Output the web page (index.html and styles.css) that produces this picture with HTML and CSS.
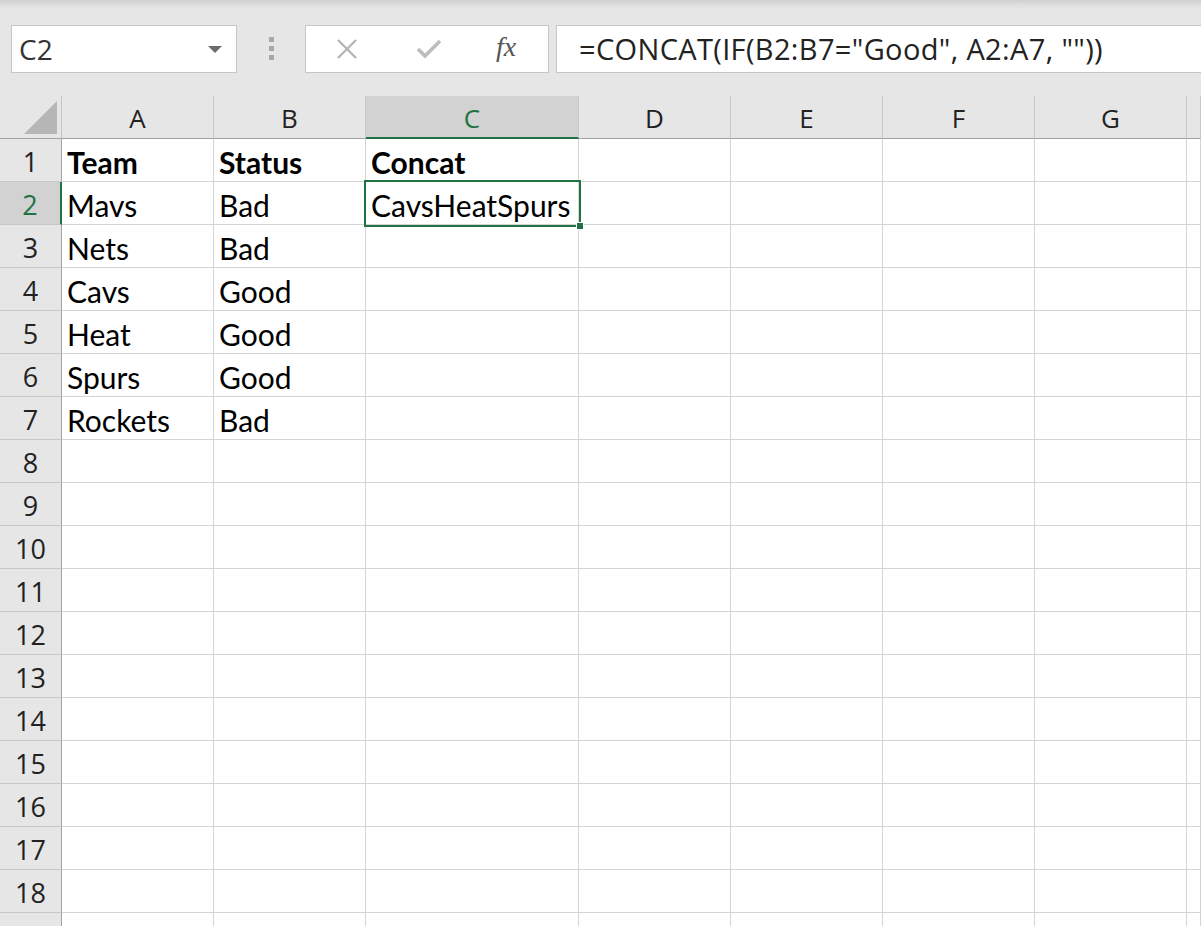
FILE: index.html
```html
<!DOCTYPE html>
<html lang="en">
<head>
    <meta charset="UTF-8">
    <title>Excel - CONCAT</title>
    <link rel="stylesheet" href="styles.css">
</head>
<body>
    <div class="toolbar">
        <div class="namebox">
            <span class="name">C2</span>
            <span class="caret"></span>
        </div>
        <div class="grip"><i></i><i></i><i></i></div>
        <div class="buttons">
            <svg class="ico" width="24" height="24" viewBox="0 0 24 24"><path d="M3 3 L21 21 M21 3 L3 21" stroke="#b3b3b3" stroke-width="2.2" fill="none"/></svg>
            <svg class="ico" width="28" height="24" viewBox="0 0 28 24"><path d="M3 12 L10 19 L25 4" stroke="#bdbdbd" stroke-width="3.6" fill="none"/></svg>
            <span class="fx">fx</span>
        </div>
        <div class="formula">=CONCAT(IF(B2:B7="Good", A2:A7, ""))</div>
    </div>

    <div class="sheet">
        <div class="corner"><span class="tri"></span></div>
        <div class="colhead">A</div>
        <div class="colhead">B</div>
        <div class="colhead active">C</div>
        <div class="colhead">D</div>
        <div class="colhead">E</div>
        <div class="colhead">F</div>
        <div class="colhead">G</div>
        <div class="colhead"></div>
    </div>

    <div class="sheet" id="rows"></div>

    <script>
        var data = [
            ["Team", "Status", "Concat"],
            ["Mavs", "Bad", "CavsHeatSpurs"],
            ["Nets", "Bad", ""],
            ["Cavs", "Good", ""],
            ["Heat", "Good", ""],
            ["Spurs", "Good", ""],
            ["Rockets", "Bad", ""]
        ];
        var html = "";
        for (var r = 1; r <= 19; r++) {
            html += '<div class="rowhead' + (r === 2 ? ' active' : '') + '">' + r + '</div>';
            for (var c = 0; c < 8; c++) {
                var val = (data[r - 1] && data[r - 1][c]) || "";
                var cls = "cell";
                if (r === 1) cls += " bold";
                if (r === 2 && c === 2) {
                    html += '<div class="' + cls + ' sel">' + val + '<span class="selbox"><span class="handle"></span></span></div>';
                } else {
                    html += '<div class="' + cls + '">' + val + '</div>';
                }
            }
        }
        document.getElementById("rows").innerHTML = html;
    </script>
</body>
</html>
```

FILE: styles.css
```css
body {
    margin: 0;
    background-color: #e6e6e6;
    overflow: hidden;
    height: 926px;
}
.toolbar {
    height: 96px;
    display: flex;
    align-items: flex-start;
    padding-top: 25px;
    box-sizing: border-box;
    background: linear-gradient(#cfcfcf 0px, #e2e2e2 6px, #e6e6e6 10px);
    font-family: "Open Sans", "Noto Sans", sans-serif;
    color: #333;
}
.namebox {
    margin-left: 11px;
    width: 226px;
    height: 48px;
    box-sizing: border-box;
    background: #fff;
    border: 1px solid #c6c6c6;
    display: flex;
    align-items: center;
    justify-content: space-between;
    padding: 0 14px 0 7px;
}
.name {
    font-size: 28px;
}
.caret {
    width: 0;
    height: 0;
    border-left: 7px solid transparent;
    border-right: 7px solid transparent;
    border-top: 7px solid #6b6b6b;
}
.grip {
    width: 68px;
    display: flex;
    flex-direction: column;
    align-items: center;
    gap: 4px;
    padding-top: 12px;
}
.grip i {
    display: block;
    width: 5px;
    height: 5px;
    background: #a8a8a8;
}
.buttons {
    width: 244px;
    height: 48px;
    box-sizing: border-box;
    background: #fff;
    border: 1px solid #c6c6c6;
    display: flex;
    align-items: center;
    padding-left: 29px;
}
.buttons .ico {
    margin-right: 56px;
}
.buttons .ico + .ico {
    margin-right: 53px;
}
.fx {
    font-family: "Liberation Serif", serif;
    font-style: italic;
    font-size: 28px;
    color: #555;
    margin-top: -4px;
}
.formula {
    margin-left: 7px;
    flex: 1;
    height: 48px;
    box-sizing: border-box;
    background: #fff;
    border: 1px solid #c6c6c6;
    border-right: none;
    padding-left: 22px;
    font-size: 29px;
    letter-spacing: 0.35px;
    line-height: 46px;
    color: #222;
    white-space: nowrap;
}
.sheet {
    display: grid;
    grid-template-columns: 62px 152px 152px 213px 152px 152px 152px 152px 1fr;
    font-family: "Lato", "Liberation Sans", sans-serif;
}
.corner, .colhead {
    height: 42px;
    border-bottom: 1px solid #a3a3a3;
    background: #e6e6e6;
}
.corner {
    position: relative;
    border-right: 1px solid #c4c4c4;
}
.tri {
    position: absolute;
    right: 4px;
    bottom: 4px;
    width: 0;
    height: 0;
    border-left: 33px solid transparent;
    border-bottom: 33px solid #b6b6b6;
}
.colhead {
    border-right: 1px solid #c8c8c8;
    text-align: center;
    font-family: "Open Sans", "Noto Sans", sans-serif;
    font-size: 26px;
    line-height: 44px;
    color: #222;
}
.colhead.active {
    background: #d2d2d2;
    color: #217346;
    border-bottom: 2px solid #217346;
    height: 41px;
}
.rowhead {
    height: 42px;
    background: #e6e6e6;
    border-right: 1px solid #a3a3a3;
    border-bottom: 1px solid #c8c8c8;
    text-align: center;
    font-family: "Open Sans", "Noto Sans", sans-serif;
    font-size: 27px;
    line-height: 46px;
    color: #222;
}
.rowhead.active {
    background: #d2d2d2;
    color: #217346;
    border-right: 2px solid #217346;
}
.cell {
    height: 42px;
    background: #fff;
    border-right: 1px solid #d4d4d4;
    border-bottom: 1px solid #d4d4d4;
    font-size: 30px;
    line-height: 46px;
    padding-left: 5px;
    color: #000;
    white-space: nowrap;
}
.cell.bold {
    font-weight: bold;
}
.cell.sel {
    position: relative;
}
.selbox {
    position: absolute;
    left: -2px;
    top: -2px;
    right: -3px;
    bottom: -3px;
    border: 2px solid #217346;
}
.handle {
    position: absolute;
    right: -5px;
    bottom: -5px;
    width: 6px;
    height: 6px;
    background: #217346;
    border: 1px solid #fff;
}
```
